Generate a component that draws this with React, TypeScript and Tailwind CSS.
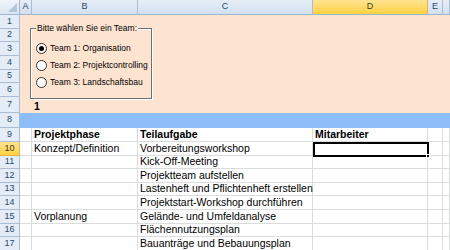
import React from 'react';

const cols = [
  { key: 'A', w: 'w-[12px]' },
  { key: 'B', w: 'w-[106px]' },
  { key: 'C', w: 'w-[175px]' },
  { key: 'D', w: 'w-[115px]' },
  { key: 'E', w: 'w-[15px]' },
  { key: 'F', w: 'flex-1' },
];

type Row = { n: number; h: string; kind: 'peach' | 'blue' | 'table'; cells?: string[]; bold?: boolean };

const rows: Row[] = [
  { n: 1, h: 'h-[14px]', kind: 'peach' },
  { n: 2, h: 'h-[13px]', kind: 'peach' },
  { n: 3, h: 'h-[14px]', kind: 'peach' },
  { n: 4, h: 'h-[14px]', kind: 'peach' },
  { n: 5, h: 'h-[13px]', kind: 'peach' },
  { n: 6, h: 'h-[14px]', kind: 'peach' },
  { n: 7, h: 'h-[16px]', kind: 'peach', cells: ['', '1'] },
  { n: 8, h: 'h-[15px]', kind: 'blue' },
  { n: 9, h: 'h-[14px]', kind: 'table', cells: ['', 'Projektphase', 'Teilaufgabe', 'Mitarbeiter'], bold: true },
  { n: 10, h: 'h-[14px]', kind: 'table', cells: ['', 'Konzept/Definition', 'Vorbereitungsworkshop', ''] },
  { n: 11, h: 'h-[13px]', kind: 'table', cells: ['', '', 'Kick-Off-Meeting', ''] },
  { n: 12, h: 'h-[14px]', kind: 'table', cells: ['', '', 'Projektteam aufstellen', ''] },
  { n: 13, h: 'h-[13px]', kind: 'table', cells: ['', '', 'Lastenheft und Pflichtenheft erstellen', ''] },
  { n: 14, h: 'h-[14px]', kind: 'table', cells: ['', '', 'Projektstart-Workshop durchführen', ''] },
  { n: 15, h: 'h-[14px]', kind: 'table', cells: ['', 'Vorplanung', 'Gelände- und Umfeldanalyse', ''] },
  { n: 16, h: 'h-[13px]', kind: 'table', cells: ['', '', 'Flächennutzungsplan', ''] },
  { n: 17, h: 'h-[14px]', kind: 'table', cells: ['', '', 'Bauanträge und Bebauungsplan', ''] },
];

const Radio = ({ checked, label }: { checked?: boolean; label: string }) => (
  <div className="flex items-center gap-[3px] h-[17px]">
    <span className="w-[11px] h-[11px] rounded-full border border-[#333] bg-white flex items-center justify-center">
      {checked && <span className="w-[5px] h-[5px] rounded-full bg-black" />}
    </span>
    <span className="text-[8.5px] text-black">{label}</span>
  </div>
);

export default function App() {
  return (
    <div className="relative w-[450px] h-[250px] overflow-hidden bg-white" style={{ fontFamily: '"Liberation Sans", Arial, sans-serif' }}>
      {/* column headers */}
      <div className="flex h-[15px] border-b border-[#9eb6ce]">
        <div className="w-[20px] shrink-0 bg-gradient-to-b from-[#f1f5fb] to-[#dbe5f2] border-r border-[#9eb6ce] relative">
          <span className="absolute right-[2px] bottom-[2px] w-0 h-0 border-l-[9px] border-l-transparent border-b-[9px] border-b-[#b4c6da]" />
        </div>
        {cols.map((c) => (
          <div
            key={c.key}
            className={`${c.w} shrink-0 flex items-center justify-center text-[9px] border-r ${
              c.key === 'D'
                ? 'bg-gradient-to-b from-[#ffe38f] to-[#ffd23d] border-[#e3b449] text-[#3e3a1a]'
                : 'bg-gradient-to-b from-[#e6eef8] to-[#d3e0f0] border-[#aabdd3] text-[#2a4a6a]'
            }`}
          >
            {c.key === 'F' ? '' : c.key}
          </div>
        ))}
      </div>

      {rows.map((r) => (
        <div key={r.n} className={`flex ${r.h}`}>
          <div
            className={`w-[20px] shrink-0 flex items-center justify-center text-[9px] border-r border-b ${
              r.n === 10
                ? 'bg-gradient-to-b from-[#ffe38f] to-[#ffd23d] border-[#e3b449] text-[#3e3a1a]'
                : 'bg-[#e4ecf7] border-[#aabdd3] text-[#2a4a6a]'
            }`}
          >
            {r.n}
          </div>
          {cols.map((c, i) => {
            const text = r.cells?.[i] ?? '';
            const bg =
              r.kind === 'peach'
                ? 'bg-[#fde4d1]'
                : r.kind === 'blue'
                ? 'bg-[#8dbdf6]'
                : 'bg-white border-r border-b border-[#dadcdd]';
            return (
              <div
                key={c.key}
                className={`${c.w} shrink-0 ${bg} relative flex items-end pl-[2px] text-[10.5px] leading-[13px] text-black whitespace-nowrap overflow-visible ${
                  r.bold ? 'font-bold' : ''
                }`}
              >
                {text && <span className={`relative z-10 ${r.n === 7 ? 'font-bold' : ''}`}>{text}</span>}
              </div>
            );
          })}
        </div>
      ))}

      {/* selected cell D10 */}
      <div className="absolute left-[313px] top-[142px] w-[116px] h-[15px] border-2 border-black pointer-events-none">
        <span className="absolute right-[-3px] bottom-[-3px] w-[4px] h-[4px] bg-black border border-white" />
      </div>

      {/* form group box */}
      <div className="absolute left-[30px] top-[28px] w-[122px] h-[71px] border border-[#6f6f6f] shadow-[inset_1px_1px_0_#ffffff,1px_1px_0_#ffffff]">
        <span className="absolute left-[5px] top-[-6px] px-[1px] bg-[#fde4d1] text-[8.5px] leading-[11px] text-black">
          Bitte wählen Sie ein Team:
        </span>
        <div className="flex flex-col pt-[11px] pl-[5px]">
          <Radio checked label="Team 1: Organisation" />
          <Radio label="Team 2: Projektcontrolling" />
          <Radio label="Team 3: Landschaftsbau" />
        </div>
      </div>
    </div>
  );
}
